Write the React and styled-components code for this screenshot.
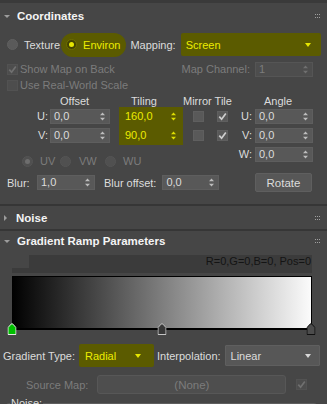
import React from "react";
import styled, { createGlobalStyle } from "styled-components";

const C = {
  bg: "#464646",
  top: "#3a3a3a",
  line: "#363636",
  text: "#dcdcdc",
  head: "#f4f4f4",
  dim: "#7c7c7c",
  field: "#585858",
  fieldBorder: "#5e5e5e",
  fieldDis: "#4d4d4d",
  olive: "#5b5b00",
  yellow: "#ecec00",
  dark: "#3b3b3b",
};

const Global = createGlobalStyle`
  html, body { margin: 0; padding: 0; background: ${C.bg}; }
  body { font-family: "Liberation Sans", Arial, sans-serif; font-size: 11px; color: ${C.text}; overflow: hidden; }
  * { box-sizing: border-box; }
`;

const Panel = styled.div`
  width: 327px;
  height: 404px;
  overflow: hidden;
  background: ${C.bg};
  display: flex;
  flex-direction: column;
`;

const TopStrip = styled.div`
  height: 3px;
  flex: none;
  background: ${C.top};
`;

const Rollout = styled.section`
  flex: none;
  display: flex;
  flex-direction: column;
  border-top: ${(p) => (p.$divider ? `2px solid ${C.line}` : "none")};
`;

const Header = styled.div`
  height: ${(p) => p.$h}px;
  flex: none;
  display: flex;
  align-items: center;
  padding: 0 7px 0 4px;
  font-weight: bold;
  font-size: 11.5px;
  color: ${C.head};
`;

const Twisty = styled.span`
  width: 0;
  height: 0;
  flex: none;
  ${(p) =>
    p.$open
      ? `border-left: 3px solid transparent; border-right: 3px solid transparent; border-top: 3.5px solid #9c9c9c; margin-right: 7px;`
      : `border-top: 3px solid transparent; border-bottom: 3px solid transparent; border-left: 3.5px solid #9c9c9c; margin-right: 9px;`}
`;

const GripBox = styled.span`
  margin-left: auto;
  display: flex;
`;

const Grip = () => (
  <GripBox>
    <svg width="5" height="4" viewBox="0 0 5 4">
      {[0, 2, 4].map((x) =>
        [0, 3].map((y) => <rect key={`${x}-${y}`} x={x} y={y} width="1" height="1" fill="#a0a0a0" />)
      )}
    </svg>
  </GripBox>
);

const Body = styled.div`
  display: flex;
  flex-direction: column;
  padding: 0 0 12px 7px;
`;

const Row = styled.div`
  display: flex;
  align-items: center;
  flex: none;
  height: ${(p) => p.$h}px;
  margin-top: ${(p) => p.$mt || 0}px;
  padding-left: ${(p) => p.$pl || 0}px;
  padding-right: ${(p) => p.$pr || 0}px;
`;

const Label = styled.span`
  white-space: nowrap;
  color: ${(p) => (p.$dim ? C.dim : C.text)};
  margin-left: ${(p) => p.$ml || 0}px;
  width: ${(p) => (p.$w ? `${p.$w}px` : "auto")};
  flex: none;
`;

const Spacer = styled.span`
  flex: 1;
`;

const RadioDot = styled.span`
  width: 11px;
  height: 11px;
  flex: none;
  border-radius: 50%;
  display: inline-flex;
  align-items: center;
  justify-content: center;
  background: ${(p) => (p.$hl ? "#434300" : p.$dim ? "#505050" : "#5a5a5a")};
  border: 1px solid ${(p) => (p.$hl ? "#6e6e00" : p.$dim ? "#555" : "#606060")};
  &::after {
    content: "";
    display: ${(p) => (p.$on ? "block" : "none")};
    width: 5px;
    height: 5px;
    border-radius: 50%;
    background: ${(p) => (p.$hl ? "#e6e600" : "#6e6e6e")};
  }
`;

const Marked = styled.span`
  display: inline-flex;
  align-items: center;
  gap: 6px;
  height: 24px;
  margin-left: 1px;
  padding: 0 6px 0 5px;
  border-radius: 12px;
  background: ${C.olive};
  color: ${C.yellow};
`;

const Arrow = ({ color }) => (
  <svg width="6" height="4" viewBox="0 0 6 4">
    <path d="M0 0H6L3 4Z" fill={color} />
  </svg>
);

const Drop = styled.div`
  width: ${(p) => p.$w}px;
  height: 21px;
  flex: none;
  display: flex;
  align-items: center;
  justify-content: space-between;
  margin-left: ${(p) => p.$ml || 0}px;
  padding: 0 ${(p) => p.$pr}px 0 ${(p) => p.$pl}px;
  background: ${(p) => (p.$hl ? C.olive : "#575757")};
  border: 1px solid ${(p) => (p.$hl ? C.olive : "#5f5f5f")};
  box-shadow: ${(p) => (p.$hl ? `0 0 0 1px ${C.olive}` : "none")};
  border-radius: 1px;
  color: ${(p) => (p.$hl ? C.yellow : C.text)};
`;

const Box = styled.span`
  width: 11px;
  height: 11px;
  flex: none;
  display: inline-flex;
  align-items: center;
  justify-content: center;
  background: ${(p) => (p.$dim ? "#4d4d4d" : "#595959")};
  border: 1px solid ${(p) => (p.$dim ? "#525252" : "#5f5f5f")};
  justify-self: ${(p) => (p.$end ? "end" : "start")};
  margin-top: ${(p) => p.$mt || 0}px;
  margin-left: ${(p) => p.$ml || 0}px;
`;

const CheckBox = ({ on, dim, end, mt, ml }) => (
  <Box $dim={dim} $end={end} $mt={mt} $ml={ml}>
    {on && (
      <svg width="9" height="9" viewBox="0 0 9 9">
        <path d="M1.3 4.6L3.6 7.2L7.8 1.4" fill="none" stroke={dim ? "#707070" : "#cfcfcf"} strokeWidth="1.7" />
      </svg>
    )}
  </Box>
);

const Spin = styled.div`
  width: ${(p) => p.$w}px;
  height: 15px;
  flex: none;
  display: flex;
  align-items: center;
  justify-content: space-between;
  padding: 0 4px 0 3px;
  margin-left: ${(p) => p.$ml || 0}px;
  justify-self: ${(p) => (p.$end ? "end" : "start")};
  background: ${(p) => (p.$hl ? C.olive : p.$dim ? C.fieldDis : C.field)};
  border: 1px solid ${(p) => (p.$hl ? C.olive : p.$dim ? "#555" : C.fieldBorder)};
  box-shadow: ${(p) => (p.$hl ? `0 0 0 2px ${C.olive}` : "none")};
  color: ${(p) => (p.$hl ? C.yellow : p.$dim ? C.dim : C.text)};
  line-height: 13px;
`;

const SpinBox = ({ value, w, hl, dim, end, ml }) => {
  const col = hl ? "#dede00" : dim ? "#707070" : "#bdbdbd";
  return (
    <Spin $w={w} $hl={hl} $dim={dim} $end={end} $ml={ml}>
      <span>{value}</span>
      <svg width="5" height="9" viewBox="0 0 5 9">
        <path d="M0 3.3L2.5 0.5L5 3.3Z M0 5.7L5 5.7L2.5 8.5Z" fill={col} />
      </svg>
    </Spin>
  );
};

const Grid = styled.div`
  display: grid;
  grid-template-columns: 43px 60px 71px 23px 24px 25px 60px;
  grid-template-rows: 17px 19px 19px 20px;
  align-items: start;
`;

const ColHead = styled.span`
  grid-column: ${(p) => p.$col};
  margin-left: ${(p) => p.$ml}px;
  padding-top: 1px;
  line-height: 16px;
  white-space: nowrap;
`;

const Axis = styled.span`
  grid-column: ${(p) => p.$col};
  text-align: right;
  padding-right: ${(p) => p.$pr}px;
  line-height: 15px;
`;

const RadioRow = styled.div`
  grid-column: 1 / 4;
  grid-row: 4;
  align-self: end;
  height: 12px;
  padding-left: 15px;
  display: grid;
  grid-template-columns: 38px 45px auto;
  align-items: center;
`;

const RadioOpt = styled.span`
  display: flex;
  align-items: center;
  gap: ${(p) => p.$gap}px;
  color: ${C.dim};
`;

const Button = styled.div`
  width: 57px;
  height: 19px;
  flex: none;
  margin-left: auto;
  display: flex;
  align-items: center;
  justify-content: center;
  background: #575757;
  border: 1px solid #5f5f5f;
  border-radius: 2px;
  font-size: 11.5px;
  color: ${C.text};
`;

const RampWrap = styled.div`
  margin: 4px 15px 0 12px;
  display: flex;
  flex-direction: column;
`;

const InfoBar = styled.div`
  margin-left: 17px;
  height: 13px;
  background: ${C.dark};
  color: #141414;
  text-align: right;
  line-height: 13px;
  padding-right: 1px;
`;

const InfoStrip = styled.div`
  height: 5px;
  background: ${C.dark};
`;

const Ramp = styled.div`
  position: relative;
  margin-top: 3px;
  height: 54px;
  border-top: 1px solid #000;
  border-right: 1px solid #000;
  border-bottom: 2px solid #000;
  background: linear-gradient(to right, #000 0%, #fbfbfb 100%);
`;

const Flag = styled.svg`
  position: absolute;
  bottom: -7px;
  transform: translateX(-50%);
`;

const Marker = ({ pos, fill, stroke }) => (
  <Flag width="9" height="12" viewBox="0 0 9 12" style={{ left: `${pos}%` }}>
    <path d="M0.5 11.5V4.6L3.6 1.1Q4.5 0.2 5.4 1.1L8.5 4.6V11.5Z" fill={fill} stroke={stroke} />
  </Flag>
);

const NoneBtn = styled.div`
  width: 189px;
  height: 19px;
  flex: none;
  margin-left: ${(p) => p.$ml}px;
  display: flex;
  align-items: center;
  justify-content: center;
  background: #4e4e4e;
  border: 1px solid #575757;
  border-radius: 3px;
  color: ${C.dim};
  font-size: 11.5px;
`;

const Group = styled.fieldset`
  margin: 3px 9px 0 5px;
  padding: 0 4px 20px;
  border: 1px solid #5e5e5e;
  border-radius: 4px;
  flex: none;
`;

const Legend = styled.legend`
  padding: 0 1px;
  line-height: 13px;
  color: ${C.text};
  font-size: 11px;
`;

export default function App() {
  return (
    <Panel>
      <Global />
      <TopStrip />

      <Rollout>
        <Header $h={26}>
          <Twisty $open />
          Coordinates
          <Grip />
        </Header>
        <Body>
          <Row $h={23} $mt={4}>
            <RadioDot />
            <Label $ml={6}>Texture</Label>
            <Marked>
              <RadioDot $on $hl />
              Environ
            </Marked>
            <Label $ml={4}>Mapping:</Label>
            <Drop $w={138} $ml={6} $hl $pl={3} $pr={8}>
              <span>Screen</span>
              <Arrow color="#e6e600" />
            </Drop>
          </Row>

          <Row $h={16} $mt={5} $pr={14}>
            <CheckBox on dim />
            <Label $dim $ml={2}>Show Map on Back</Label>
            <Spacer />
            <Label $dim>Map Channel:</Label>
            <SpinBox value="1" w={58} dim ml={5} />
          </Row>

          <Row $h={14} $mt={1}>
            <CheckBox dim />
            <Label $dim $ml={2}>Use Real-World Scale</Label>
          </Row>

          <Grid>
            <ColHead $col="2" $ml={10}>Offset</ColHead>
            <ColHead $col="3" $ml={21}>Tiling</ColHead>
            <ColHead $col="4 / span 2" $ml={2}>Mirror Tile</ColHead>
            <ColHead $col="7" $ml={11}>Angle</ColHead>

            <Axis $col="1" $pr={2}>U:</Axis>
            <SpinBox value="0,0" w={60} />
            <SpinBox value="160,0" w={60} hl end />
            <CheckBox end mt={2} />
            <CheckBox on end mt={2} />
            <Axis $col="6" $pr={1}>U:</Axis>
            <SpinBox value="0,0" w={58} end />

            <Axis $col="1" $pr={2}>V:</Axis>
            <SpinBox value="0,0" w={60} />
            <SpinBox value="90,0" w={60} hl end />
            <CheckBox end mt={2} />
            <CheckBox on end mt={2} />
            <Axis $col="6" $pr={1}>V:</Axis>
            <SpinBox value="0,0" w={58} end />

            <Axis $col="6" $pr={1}>W:</Axis>
            <SpinBox value="0,0" w={58} end />
            <RadioRow>
              <RadioOpt $gap={7}>
                <RadioDot $dim $on />
                UV
              </RadioOpt>
              <RadioOpt $gap={8}>
                <RadioDot $dim />
                VW
              </RadioOpt>
              <RadioOpt $gap={7}>
                <RadioDot $dim />
                WU
              </RadioOpt>
            </RadioRow>
          </Grid>

          <Row $h={19} $mt={6} $pr={15}>
            <Label $w={30}>Blur:</Label>
            <SpinBox value="1,0" w={58} />
            <Label $ml={9}>Blur offset:</Label>
            <SpinBox value="0,0" w={57} ml={6} />
            <Button>Rotate</Button>
          </Row>
        </Body>
      </Rollout>

      <Rollout $divider>
        <Header $h={23}>
          <Twisty />
          Noise
          <Grip />
        </Header>
      </Rollout>

      <Rollout $divider>
        <Header $h={20}>
          <Twisty $open />
          Gradient Ramp Parameters
          <Grip />
        </Header>
        <RampWrap>
          <InfoBar>R=0,G=0,B=0, Pos=0</InfoBar>
          <InfoStrip />
          <Ramp>
            <Marker pos={0} fill="#00bf00" stroke="#e6e6e6" />
            <Marker pos={50} fill="#383838" stroke="#c4c4c4" />
            <Marker pos={100} fill="#4c4c4c" stroke="#101010" />
          </Ramp>
        </RampWrap>

        <Row $h={21} $mt={15} $pl={3}>
          <Label>Gradient Type:</Label>
          <Drop $w={73} $ml={5} $hl $pl={4} $pr={11}>
            <span>Radial</span>
            <Arrow color="#e6e600" />
          </Drop>
          <Label $ml={4}>Interpolation:</Label>
          <Drop $w={95} $ml={4} $pl={5} $pr={8}>
            <span>Linear</span>
            <Arrow color="#d8d8d8" />
          </Drop>
        </Row>

        <Row $h={19} $mt={9} $pl={26}>
          <Label $dim>Source Map:</Label>
          <NoneBtn $ml={9}>(None)</NoneBtn>
          <CheckBox on dim ml={10} />
        </Row>

        <Group>
          <Legend>Noise:</Legend>
        </Group>
      </Rollout>
    </Panel>
  );
}
